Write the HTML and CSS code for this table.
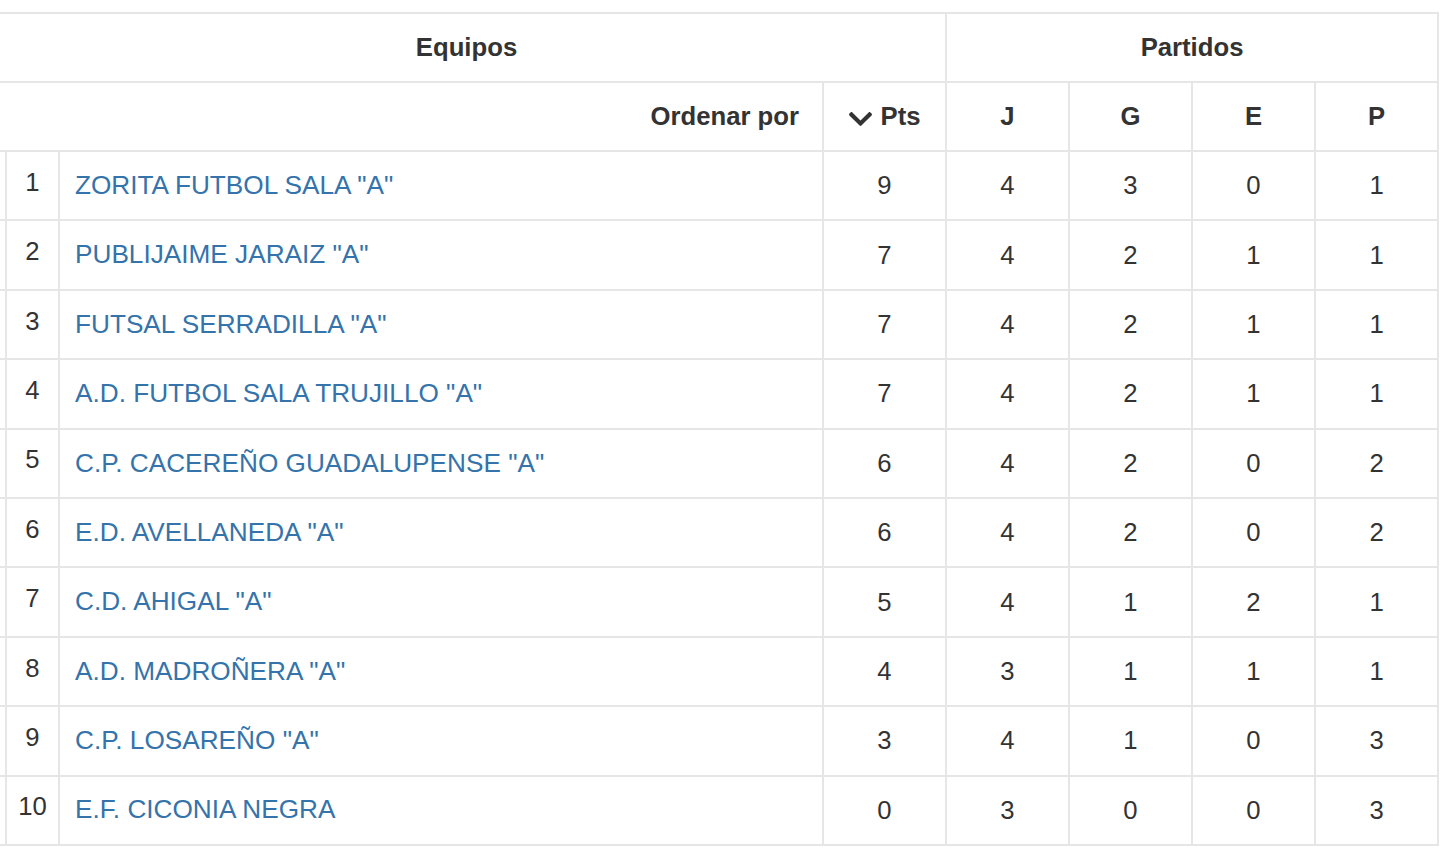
FILE: index.html
```html
<!DOCTYPE html>
<html lang="es">
<head>
<meta charset="utf-8">
<title>Clasificación</title>
<link rel="stylesheet" href="styles.css">
</head>
<body>
<div class="wrap">
<table class="standings">
  <colgroup>
    <col class="c-stub">
    <col class="c-pos">
    <col class="c-team">
    <col class="c-num">
    <col class="c-num">
    <col class="c-num">
    <col class="c-num">
    <col class="c-num">
  </colgroup>
  <thead>
    <tr class="hrow1">
      <th colspan="4" class="group">Equipos</th>
      <th colspan="4" class="group">Partidos</th>
    </tr>
    <tr class="hrow2">
      <th colspan="3" class="order">Ordenar por</th>
      <th class="num sorted"><svg class="chev" viewBox="5 123 438 266" width="23" height="14" aria-hidden="true"><path d="M207.029 381.476L12.686 187.132c-9.373-9.373-9.373-24.569 0-33.941l22.667-22.667c9.357-9.357 24.522-9.375 33.901-.04L224 284.505l154.745-154.021c9.379-9.335 24.544-9.317 33.901.04l22.667 22.667c9.373 9.373 9.373 24.569 0 33.941L240.971 381.476c-9.373 9.372-24.569 9.372-33.942 0z"/></svg>Pts</th>
      <th class="num">J</th>
      <th class="num">G</th>
      <th class="num">E</th>
      <th class="num">P</th>
    </tr>
  </thead>
  <tbody>
    <tr><td class="stub"></td><td class="pos">1</td><td class="team"><a href="#">ZORITA FUTBOL SALA "A"</a></td><td class="num">9</td><td class="num">4</td><td class="num">3</td><td class="num">0</td><td class="num">1</td></tr>
    <tr><td class="stub"></td><td class="pos">2</td><td class="team"><a href="#">PUBLIJAIME JARAIZ "A"</a></td><td class="num">7</td><td class="num">4</td><td class="num">2</td><td class="num">1</td><td class="num">1</td></tr>
    <tr><td class="stub"></td><td class="pos">3</td><td class="team"><a href="#">FUTSAL SERRADILLA "A"</a></td><td class="num">7</td><td class="num">4</td><td class="num">2</td><td class="num">1</td><td class="num">1</td></tr>
    <tr><td class="stub"></td><td class="pos">4</td><td class="team"><a href="#">A.D. FUTBOL SALA TRUJILLO "A"</a></td><td class="num">7</td><td class="num">4</td><td class="num">2</td><td class="num">1</td><td class="num">1</td></tr>
    <tr><td class="stub"></td><td class="pos">5</td><td class="team"><a href="#">C.P. CACEREÑO GUADALUPENSE "A"</a></td><td class="num">6</td><td class="num">4</td><td class="num">2</td><td class="num">0</td><td class="num">2</td></tr>
    <tr><td class="stub"></td><td class="pos">6</td><td class="team"><a href="#">E.D. AVELLANEDA "A"</a></td><td class="num">6</td><td class="num">4</td><td class="num">2</td><td class="num">0</td><td class="num">2</td></tr>
    <tr><td class="stub"></td><td class="pos">7</td><td class="team"><a href="#">C.D. AHIGAL "A"</a></td><td class="num">5</td><td class="num">4</td><td class="num">1</td><td class="num">2</td><td class="num">1</td></tr>
    <tr><td class="stub"></td><td class="pos">8</td><td class="team"><a href="#">A.D. MADROÑERA "A"</a></td><td class="num">4</td><td class="num">3</td><td class="num">1</td><td class="num">1</td><td class="num">1</td></tr>
    <tr><td class="stub"></td><td class="pos">9</td><td class="team"><a href="#">C.P. LOSAREÑO "A"</a></td><td class="num">3</td><td class="num">4</td><td class="num">1</td><td class="num">0</td><td class="num">3</td></tr>
    <tr><td class="stub"></td><td class="pos">10</td><td class="team"><a href="#">E.F. CICONIA NEGRA</a></td><td class="num">0</td><td class="num">3</td><td class="num">0</td><td class="num">0</td><td class="num">3</td></tr>
  </tbody>
</table>
</div>
</body>
</html>
```
FILE: styles.css
```css
html, body {
  margin: 0;
  padding: 0;
  background: #ffffff;
}

body {
  font-family: "Liberation Sans", Arial, Helvetica, sans-serif;
  font-size: 25.7px;
  color: #333333;
  overflow: hidden;
}

.wrap {
  padding-top: 12px;
}

.standings {
  border-collapse: collapse;
  table-layout: fixed;
  width: 1451px;
  margin-left: -12px;
  line-height: 1.2;
}

.c-stub { width: 18px; }
.c-pos { width: 53px; }
.c-team { width: 764px; }
.c-num { width: 123px; }

.standings th,
.standings td {
  border: 2px solid #e6e6e6;
  padding: 0;
  vertical-align: middle;
}

.standings th {
  font-weight: bold;
  color: #333333;
}

.standings .hrow1 { height: 69px; }
.standings .hrow2 { height: 69px; }
.standings tbody tr { height: 69.4px; }

.standings th:first-child,
.standings td:first-child {
  border-left: none;
}

.standings .group {
  text-align: center;
}

.standings .order {
  text-align: right;
  padding-right: 23px;
}

.standings .num {
  text-align: center;
}

.standings .sorted {
  white-space: nowrap;
}

.chev {
  fill: #333333;
  margin-right: 9px;
  vertical-align: -1px;
}

.standings .pos {
  text-align: center;
  padding-bottom: 7px;
}

.standings .team {
  padding-left: 15px;
  text-align: left;
  font-size: 26.2px;
}

.team a {
  color: #3573ab;
  text-decoration: none;
}
```
